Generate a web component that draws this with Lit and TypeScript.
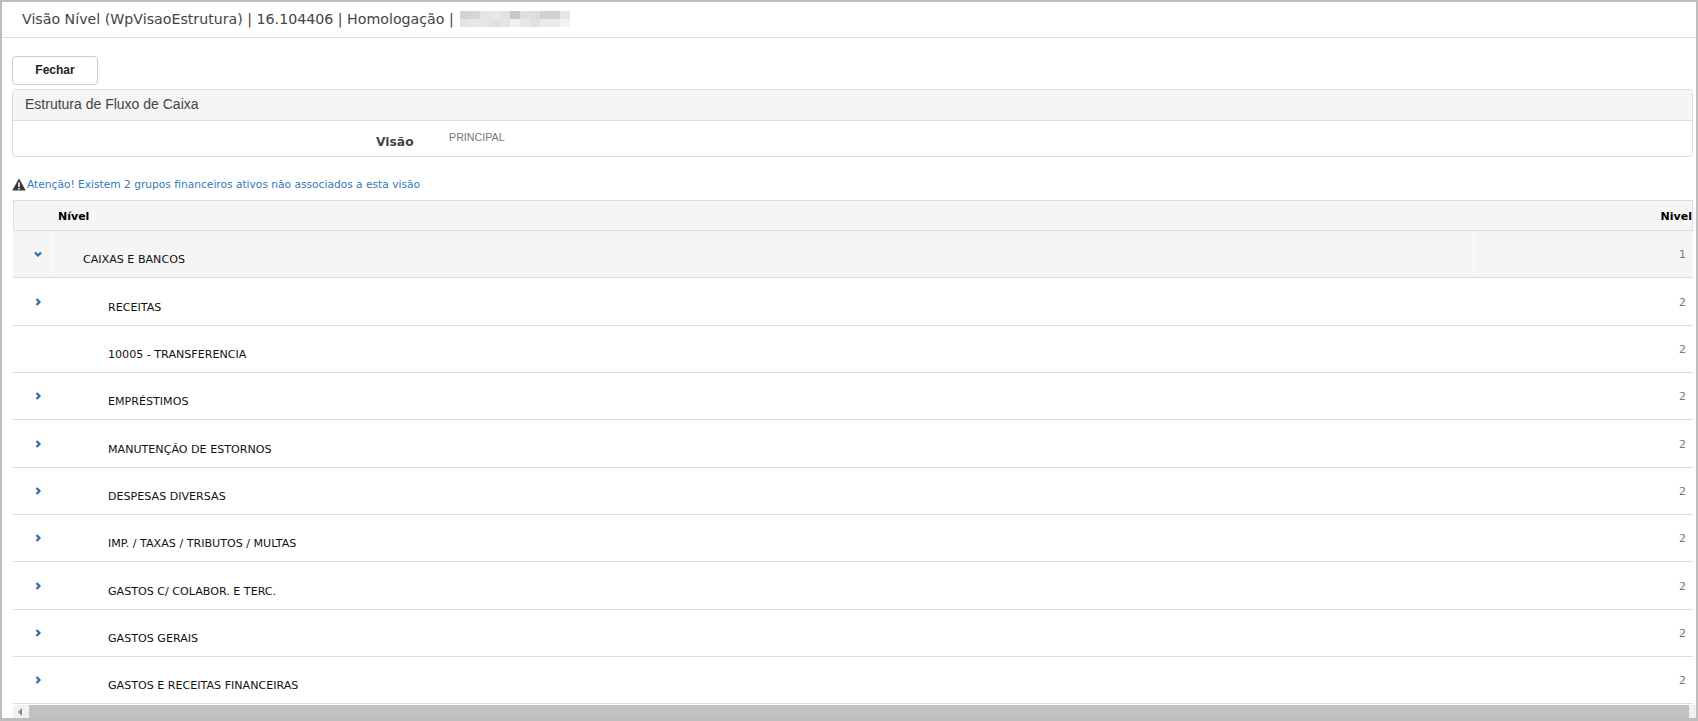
import { LitElement, html, css } from "lit";
import { customElement } from "lit/decorators.js";

const rows: [string, number, boolean][] = [
  ["CAIXAS E BANCOS", 1, true],
  ["RECEITAS", 2, true],
  ["10005 - TRANSFERENCIA", 2, false],
  ["EMPRÉSTIMOS", 2, true],
  ["MANUTENÇÃO DE ESTORNOS", 2, true],
  ["DESPESAS DIVERSAS", 2, true],
  ["IMP. / TAXAS / TRIBUTOS / MULTAS", 2, true],
  ["GASTOS C/ COLABOR. E TERC.", 2, true],
  ["GASTOS GERAIS", 2, true],
  ["GASTOS E RECEITAS FINANCEIRAS", 2, true],
];
const mosaic = [
  "#d2d2d2","#d6d6d2","#e2e4e8","#e8e8e8","#e4e2e0","#c8c8c8","#e0dede","#dcdcdc","#cfd0cf","#cfd0cf","#e2e5ea",
  "#e4e4e4","#e8e6e2","#e6e6e6","#e0e0e0","#e2e5ea","#f2f0ec","#e8e8e8","#e0e0e0","#e8ecee","#e8ecee","#f2f2f2",
];

@customElement("app-root")
export class AppRoot extends LitElement {
  static styles = css`
    :host { display: block; height: 721px; box-sizing: border-box; overflow: hidden; background: #fff; position: relative;
      border: 2px solid #bdbdbd; border-bottom: 3px solid #bdbdbd; font-family: "Liberation Sans", Arial, sans-serif; }
    .title { height: 36px; box-sizing: border-box; border-bottom: 1px solid #ddd; display: flex; align-items: center;
      padding: 0 0 2px 20px; font: 14.2px/18px "DejaVu Sans", Verdana, sans-serif; color: #444; gap: 6px; }
    .mosaic { display: grid; grid-template-columns: repeat(11, 10px); grid-auto-rows: 8px; }
    .body { padding: 18px 3px 0 10px; }
    .btn { display: flex; align-items: center; justify-content: center; width: 86px; height: 29px; box-sizing: border-box;
      border: 1px solid #ccc; border-radius: 4px; padding-bottom: 1px; font-weight: 700; font-size: 12px; color: #222; background: #fff; }
    .panel { margin-top: 4px; border: 1px solid #ddd; border-radius: 4px; height: 68px; box-sizing: border-box; }
    .panel-h { height: 31px; box-sizing: border-box; background: #f5f5f5; border-bottom: 1px solid #ddd;
      padding: 0 12px 2px; display: flex; align-items: center; font-size: 14px; color: #444; border-radius: 3px 3px 0 0; }
    .panel-b { display: flex; height: 35px; }
    .lab { margin-left: 363px; margin-top: 13px; width: 73px; font: 700 12.3px/16px "DejaVu Sans", Verdana, sans-serif; color: #444; }
    .val { margin-top: 9px; font-size: 10.7px; line-height: 14px; color: #777; }
    .warn { display: flex; align-items: center; gap: 1px; height: 16px; margin-top: 20px; font: 10.65px/16px "DejaVu Sans", Verdana, sans-serif; color: #337ab7; }
    .warn svg { width: 14px; height: 13px; flex: none; margin-top: -2px; }
    .table { margin: 7px 0 0 1px; }
    .th { height: 31px; box-sizing: border-box; background: #f5f5f5; border: 1px solid #ddd; display: flex; justify-content: space-between;
      align-items: center; padding: 3px 0 0 44px; font: 700 11px/14px "DejaVu Sans", Verdana, sans-serif; color: #000; }
    .tr { height: 47.35px; box-sizing: border-box; border-bottom: 1px solid #ddd; display: grid; grid-template-columns: 38px 1fr 220px; }
    .tr.open { background: #f5f5f5; }
    .tr.open .c, .tr.open .n { border-left: 1px solid #fbfbfb; }
    .ic { display: flex; align-items: center; justify-content: center; padding-left: 12px; }
    .ic svg { width: 8px; height: 8px; fill: none; stroke: #2c6aa8; stroke-width: 2.2; }
    .c { display: flex; align-items: center; padding: 12px 0 0 31px; font: 11.1px/14px "DejaVu Sans", Verdana, sans-serif; color: #111; }
    .tr.l2 .c { padding-left: 57px; }
    .n { display: flex; align-items: center; justify-content: flex-end; padding: 2px 7px 0 0; font: 11px/14px "DejaVu Sans", Verdana, sans-serif; color: #777; }
    .sb { position: absolute; left: 11px; right: 0; bottom: 0; height: 13px; background: #f1f1f1; display: flex; align-items: center; }
    .sb .a { width: 0; height: 0; border: 4px solid transparent; border-right: 4px solid #8a8a8a; border-left: 0; margin-left: 5px; }
    .sb .t { position: absolute; left: 16px; right: 7px; top: 0; bottom: 0; background: #c1c1c1; }
  `;
  render() {
    return html`
      <div class="title"><span>Visão Nível (WpVisaoEstrutura) | 16.104406 | Homologação |</span>
        <div class="mosaic">${mosaic.map((c) => html`<i style="background:${c}"></i>`)}</div></div>
      <div class="body">
        <div class="btn">Fechar</div>
        <div class="panel">
          <div class="panel-h">Estrutura de Fluxo de Caixa</div>
          <div class="panel-b"><div class="lab">Visão</div><div class="val">PRINCIPAL</div></div>
        </div>
        <div class="warn"><svg viewBox="0 0 14 13"><path fill="#3a3a3a" d="M7 0.5 13.8 12.5H.2Z"/><path fill="#fff" d="M6.2 4.5h1.6v4.5H6.2zM6.2 10h1.6v1.4H6.2z"/></svg><span>Atenção! Existem 2 grupos financeiros ativos não associados a esta visão</span></div>
        <div class="table">
          <div class="th"><span>Nível</span><span>Nivel</span></div>
          ${rows.map(([t, n, ex], i) => html`<div class="tr ${i === 0 ? "open" : "l2"}">
            <div class="ic">${ex ? html`<svg viewBox="0 0 8 8"><path d="${i === 0 ? "M1 2.5 4 5.5 7 2.5" : "M2.5 1 5.5 4 2.5 7"}"/></svg>` : ""}</div>
            <div class="c">${t}</div><div class="n">${n}</div></div>`)}
        </div>
      </div>
      <div class="sb"><div class="a"></div><div class="t"></div></div>
    `;
  }
}
